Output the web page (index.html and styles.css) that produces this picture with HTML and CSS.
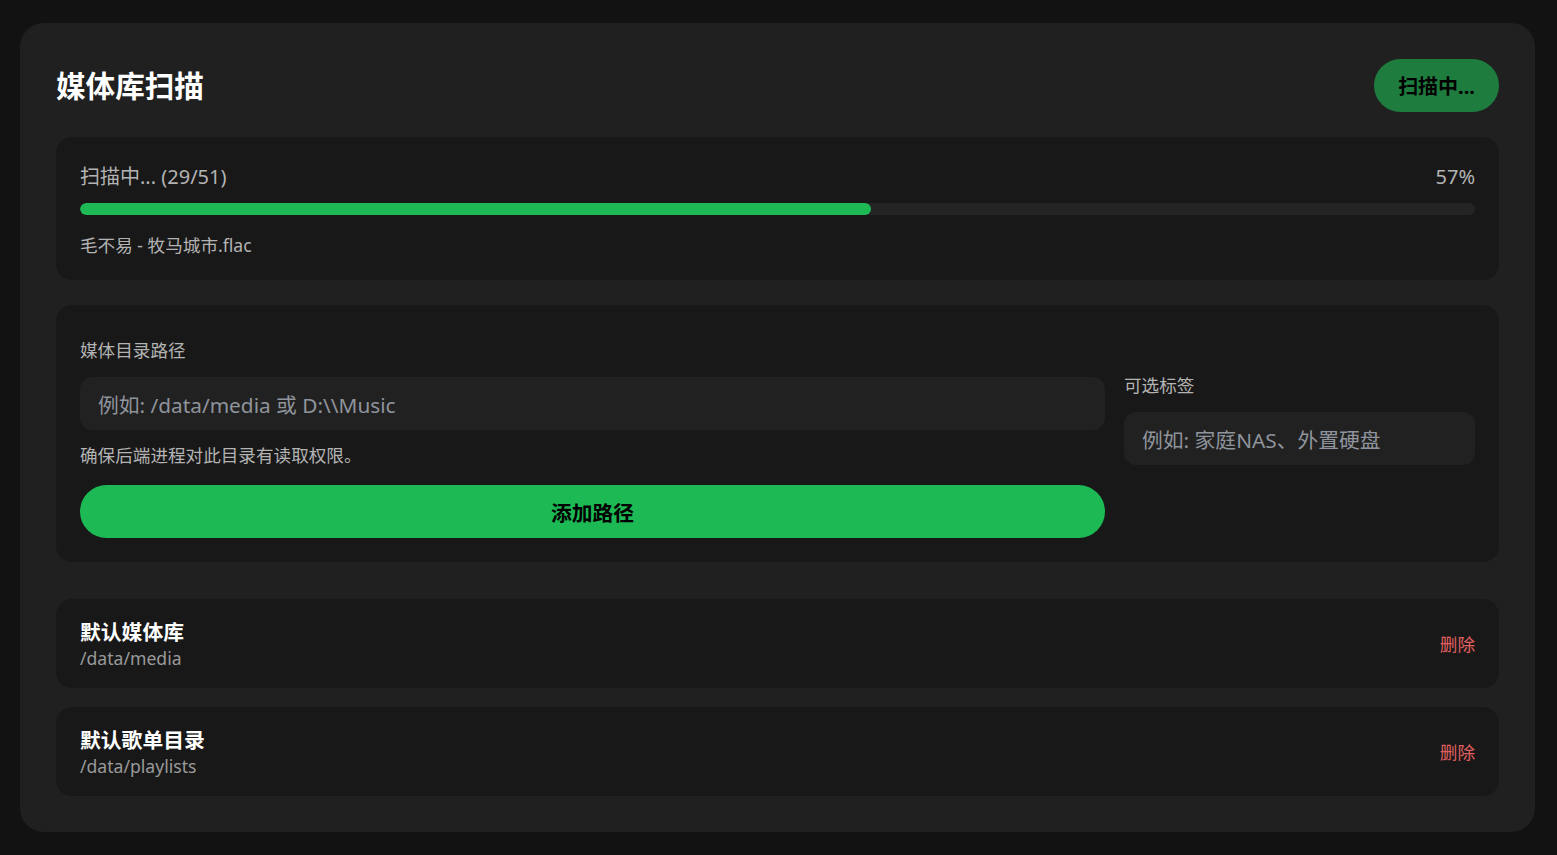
FILE: index.html
```html
<!DOCTYPE html>
<html lang="zh-CN">
<head>
<meta charset="utf-8">
<title>媒体库扫描</title>
<link rel="stylesheet" href="styles.css">
</head>
<body>
<div class="page">
  <section class="card">
    <header class="card-head">
      <h1 class="title">媒体库扫描</h1>
      <button class="scan-btn">扫描中...</button>
    </header>

    <div class="panel progress">
      <div class="progress-top">
        <span>扫描中... (29/51)</span>
        <span>57%</span>
      </div>
      <div class="track"><div class="fill" style="width:56.7%"></div></div>
      <div class="current">毛不易 - 牧马城市.flac</div>
    </div>

    <div class="panel form">
      <div class="col-main">
        <label class="label">媒体目录路径</label>
        <div class="input">例如: /data/media 或 D:\\Music</div>
        <p class="hint">确保后端进程对此目录有读取权限。</p>
        <button class="add-btn">添加路径</button>
      </div>
      <div class="col-side">
        <label class="label">可选标签</label>
        <div class="input">例如: 家庭NAS、外置硬盘</div>
      </div>
    </div>

    <div class="list">
      <div class="item">
        <div class="item-info">
          <div class="item-name">默认媒体库</div>
          <div class="item-path">/data/media</div>
        </div>
        <button class="del">删除</button>
      </div>
      <div class="item">
        <div class="item-info">
          <div class="item-name">默认歌单目录</div>
          <div class="item-path">/data/playlists</div>
        </div>
        <button class="del">删除</button>
      </div>
    </div>
  </section>
</div>
</body>
</html>
```

FILE: styles.css
```css
* { box-sizing: border-box; }
html, body {
  margin: 0;
  background: #121212;
  font-family: "Noto Sans", "Noto Sans CJK SC", sans-serif;
  color: #fff;
}
.page {
  padding: 23px 22px 23px 20px;
}
.card {
  background: #202020;
  border-radius: 24px;
  padding: 36px;
}
.card-head {
  display: flex;
  align-items: center;
  justify-content: space-between;
  margin-bottom: 25px;
}
.title {
  margin: 0;
  font-size: 29.6px;
  font-weight: 700;
  line-height: 40px;
  color: #fff;
}
.scan-btn {
  height: 53px;
  padding: 0 24px;
  border: none;
  border-radius: 27px;
  background: #1e7c3f;
  color: #000;
  font-family: inherit;
  font-size: 20px;
  font-weight: 700;
}
.panel {
  background: #181818;
  border-radius: 16px;
}
.progress {
  padding: 24px 24px 22px;
}
.progress-top {
  display: flex;
  justify-content: space-between;
  font-size: 20px;
  line-height: 32px;
  color: #b3b3b3;
}
.track {
  margin-top: 10px;
  height: 12px;
  border-radius: 6px;
  background: #242424;
  overflow: hidden;
}
.fill {
  height: 100%;
  border-radius: 6px;
  background: #1db954;
}
.current {
  margin-top: 17px;
  font-size: 17.6px;
  line-height: 26px;
  color: #b3b3b3;
}
.form {
  margin-top: 25px;
  padding: 32px 24px 24px;
  display: grid;
  grid-template-columns: 1fr 351px;
  column-gap: 19px;
}
.col-main, .col-side {
  display: flex;
  flex-direction: column;
}
.col-side {
  align-self: center;
  padding-bottom: 38px;
}
.label {
  font-size: 17.6px;
  line-height: 26px;
  color: #b3b3b3;
  margin-bottom: 14px;
}
.input {
  height: 53px;
  border-radius: 12px;
  background: #212121;
  padding: 0 18px;
  display: flex;
  align-items: center;
  font-size: 20.8px;
  color: #8f949c;
  white-space: nowrap;
}
.hint {
  margin: 12px 0 17px;
  font-size: 17.6px;
  line-height: 26px;
  color: #b3b3b3;
}
.add-btn {
  height: 53px;
  border: none;
  border-radius: 27px;
  background: #1db954;
  color: #000;
  font-family: inherit;
  font-size: 20.8px;
  font-weight: 700;
}
.list {
  margin-top: 37px;
  display: flex;
  flex-direction: column;
  gap: 19px;
}
.item {
  height: 89px;
  background: #181818;
  border-radius: 16px;
  padding: 0 24px;
  display: flex;
  align-items: center;
  justify-content: space-between;
}
.item-name {
  font-size: 20.8px;
  font-weight: 700;
  line-height: 28px;
  color: #fff;
}
.item-path {
  font-size: 17.6px;
  line-height: 24px;
  color: #9a9a9a;
}
.del {
  border: none;
  background: none;
  padding: 0;
  font-family: inherit;
  font-size: 17.6px;
  color: #e06060;
}
```
